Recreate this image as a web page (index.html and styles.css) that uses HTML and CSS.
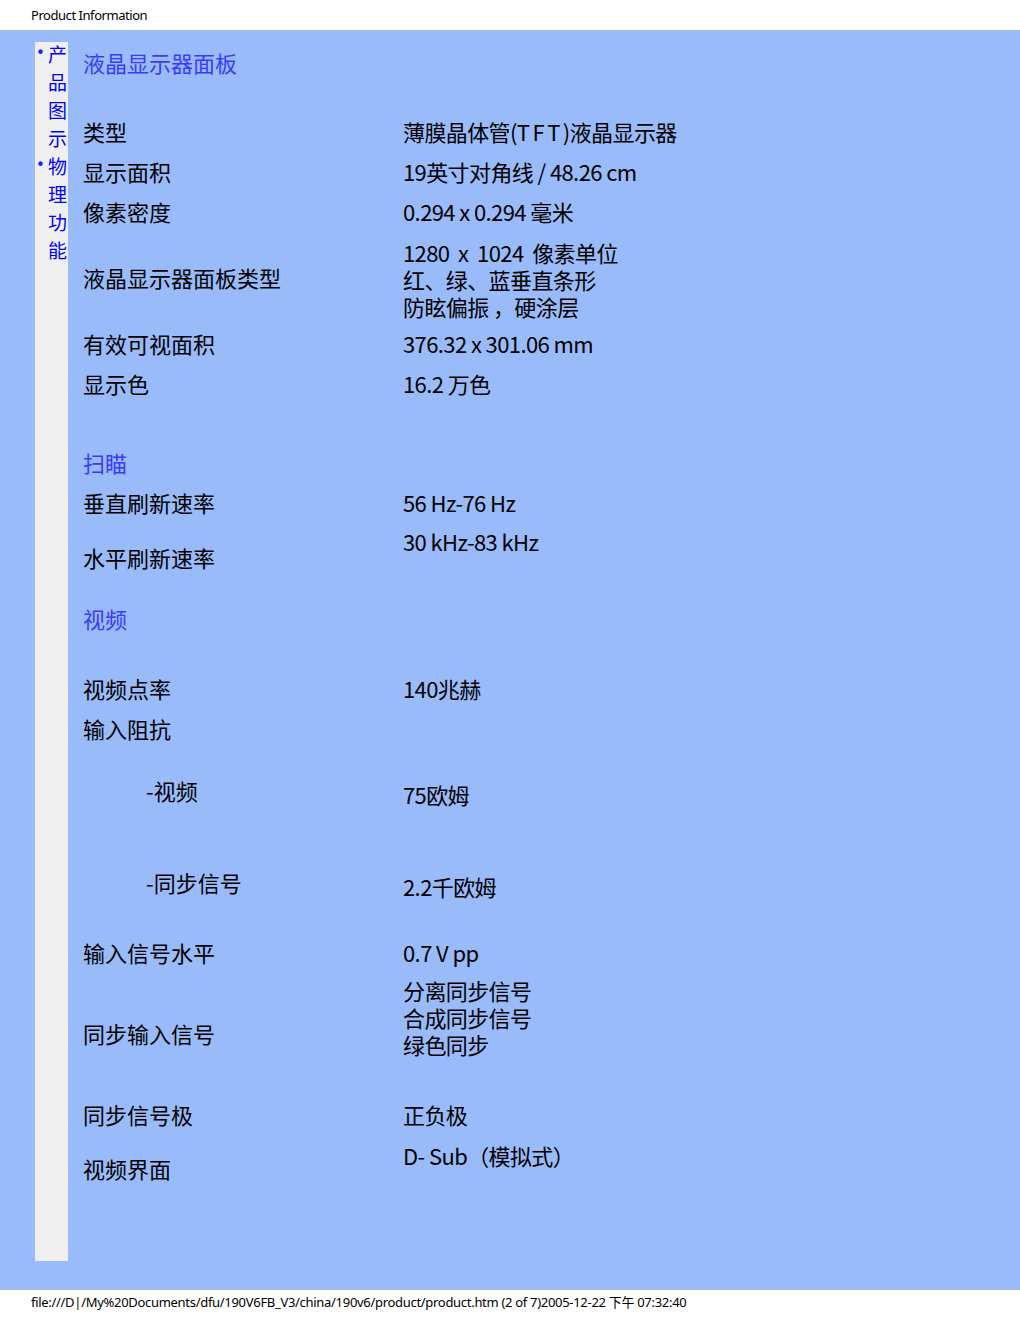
FILE: index.html
```html
<!DOCTYPE html>
<html lang="zh-CN">
<head>
<meta charset="utf-8">
<title>Product Information</title>
<link rel="stylesheet" href="styles.css">
</head>
<body>
<div class="topbar">Product Information</div>
<div class="page">
  <ul class="sidenav">
    <li><span class="dot">•</span><a href="#">产品图示</a></li>
    <li><span class="dot">•</span><a href="#">物理功能</a></li>
  </ul>
  <div class="content">
    <h2 class="title">液晶显示器面板</h2>
    <div class="spec first"><div class="lab">类型</div><div class="val">薄膜晶体管(<span class="wide">TFT</span>)液晶显示器</div></div>
    <div class="spec"><div class="lab">显示面积</div><div class="val">19英寸对角线 / 48.26 cm</div></div>
    <div class="spec"><div class="lab">像素密度</div><div class="val">0.294 x 0.294 毫米</div></div>
    <div class="spec multi"><div class="lab">液晶显示器面板类型</div><div class="val">1280&nbsp; x&nbsp; 1024&nbsp; 像素单位<br>红、绿、蓝垂直条形<br>防眩偏振 ，硬涂层</div></div>
    <div class="spec"><div class="lab">有效可视面积</div><div class="val">376.32 x 301.06 mm</div></div>
    <div class="spec"><div class="lab">显示色</div><div class="val">16.2 万色</div></div>

    <h2 class="title sec scan">扫瞄</h2>
    <div class="spec"><div class="lab">垂直刷新速率</div><div class="val">56 Hz-76 Hz</div></div>
    <div class="spec hscan"><div class="lab">水平刷新速率</div><div class="val">30 kHz-83 kHz</div></div>

    <h2 class="title sec video">视频</h2>
    <div class="spec first-video"><div class="lab">视频点率</div><div class="val">140兆赫</div></div>
    <div class="spec"><div class="lab">输入阻抗</div><div class="val"></div></div>
    <div class="spec sub h84"><div class="lab">-视频</div><div class="val">75欧姆</div></div>
    <div class="spec sub h100"><div class="lab">-同步信号</div><div class="val">2.2千欧姆</div></div>
    <div class="spec"><div class="lab">输入信号水平</div><div class="val">0.7 V pp</div></div>
    <div class="spec sync"><div class="lab">同步输入信号</div><div class="val">分离同步信号<br>合成同步信号<br>绿色同步</div></div>
    <div class="spec"><div class="lab">同步信号极</div><div class="val">正负极</div></div>
    <div class="spec iface"><div class="lab">视频界面</div><div class="val">D- Sub（模拟式）</div></div>
  </div>
</div>
<div class="footer">file:///D|/My%20Documents/dfu/190V6FB_V3/china/190v6/product/product.htm (2 of 7)2005-12-22 下午 07:32:40</div>
</body>
</html>
```

FILE: styles.css
```css
html, body {
  margin: 0;
  padding: 0;
  background: #ffffff;
}
body {
  font-family: "Noto Sans", "Noto Sans CJK SC", sans-serif;
  color: #000;
  width: 1020px;
}
.topbar {
  height: 30px;
  line-height: 30px;
  padding-left: 31px;
  font-size: 13px;
  letter-spacing: -0.45px;
}
.page {
  background: #99bbf9;
  display: flex;
  align-items: stretch;
  padding: 12px 0 29px 35px;
}
.sidenav {
  list-style: none;
  margin: 0;
  padding: 0;
  width: 33px;
  background: #efefef;
  font-family: "Noto Sans CJK SC", sans-serif;
  font-size: 19px;
  line-height: 28px;
}
.sidenav li {
  display: flex;
}
.sidenav .dot {
  width: 13px;
  color: #1a1aff;
  font-family: "DejaVu Sans", sans-serif;
  font-size: 15px;
  line-height: 22px;
  text-align: left;
  padding-left: 1px;
  box-sizing: border-box;
}
.sidenav a {
  display: block;
  width: 20px;
  margin-top: -2px;
  margin-bottom: 2px;
  color: #0000ff;
  text-decoration: none;
}
.content {
  flex: 1;
  padding-left: 15px;
  padding-bottom: 59px;
  font-family: "Noto Sans CJK SC", sans-serif;
  font-size: 22px;
}
.title {
  margin: 0;
  font-weight: normal;
  font-size: 22px;
  line-height: 27px;
  color: #3a3aff;
  padding-top: 7px;
}
.spec {
  display: grid;
  grid-template-columns: 320px 1fr;
  height: 40px;
  align-items: center;
  line-height: 27px;
}
.spec .val {
  letter-spacing: -0.6px;
}
.spec .val .wide {
  letter-spacing: 2.5px;
}
.spec.first {
  margin-top: 35px;
}
.spec.multi {
  height: 92px;
}
.spec.multi .val {
  padding-top: 5px;
}
.title.sec {
  height: 40px;
  line-height: 40px;
  padding-top: 0;
}
.title.scan {
  margin-top: 39px;
}
.spec.hscan {
  height: 70px;
}
.spec.hscan .val {
  align-self: start;
  padding-top: 6px;
}
.title.video {
  margin-top: 6px;
}
.spec.first-video {
  margin-top: 30px;
}
.spec.sub .lab {
  padding-left: 63px;
}
.spec.h84 {
  height: 84px;
}
.spec.h100 {
  height: 100px;
}
.spec.sub .val {
  padding-top: 8px;
}
.spec.sync {
  height: 122px;
}
.spec.sync .val {
  align-self: start;
  padding-top: 5px;
}
.spec.iface {
  height: 68px;
}
.spec.iface .val {
  align-self: start;
  padding-top: 8px;
}
.footer {
  padding-left: 31px;
  height: 30px;
  line-height: 25px;
  font-size: 13px;
  letter-spacing: -0.3px;
}
```
